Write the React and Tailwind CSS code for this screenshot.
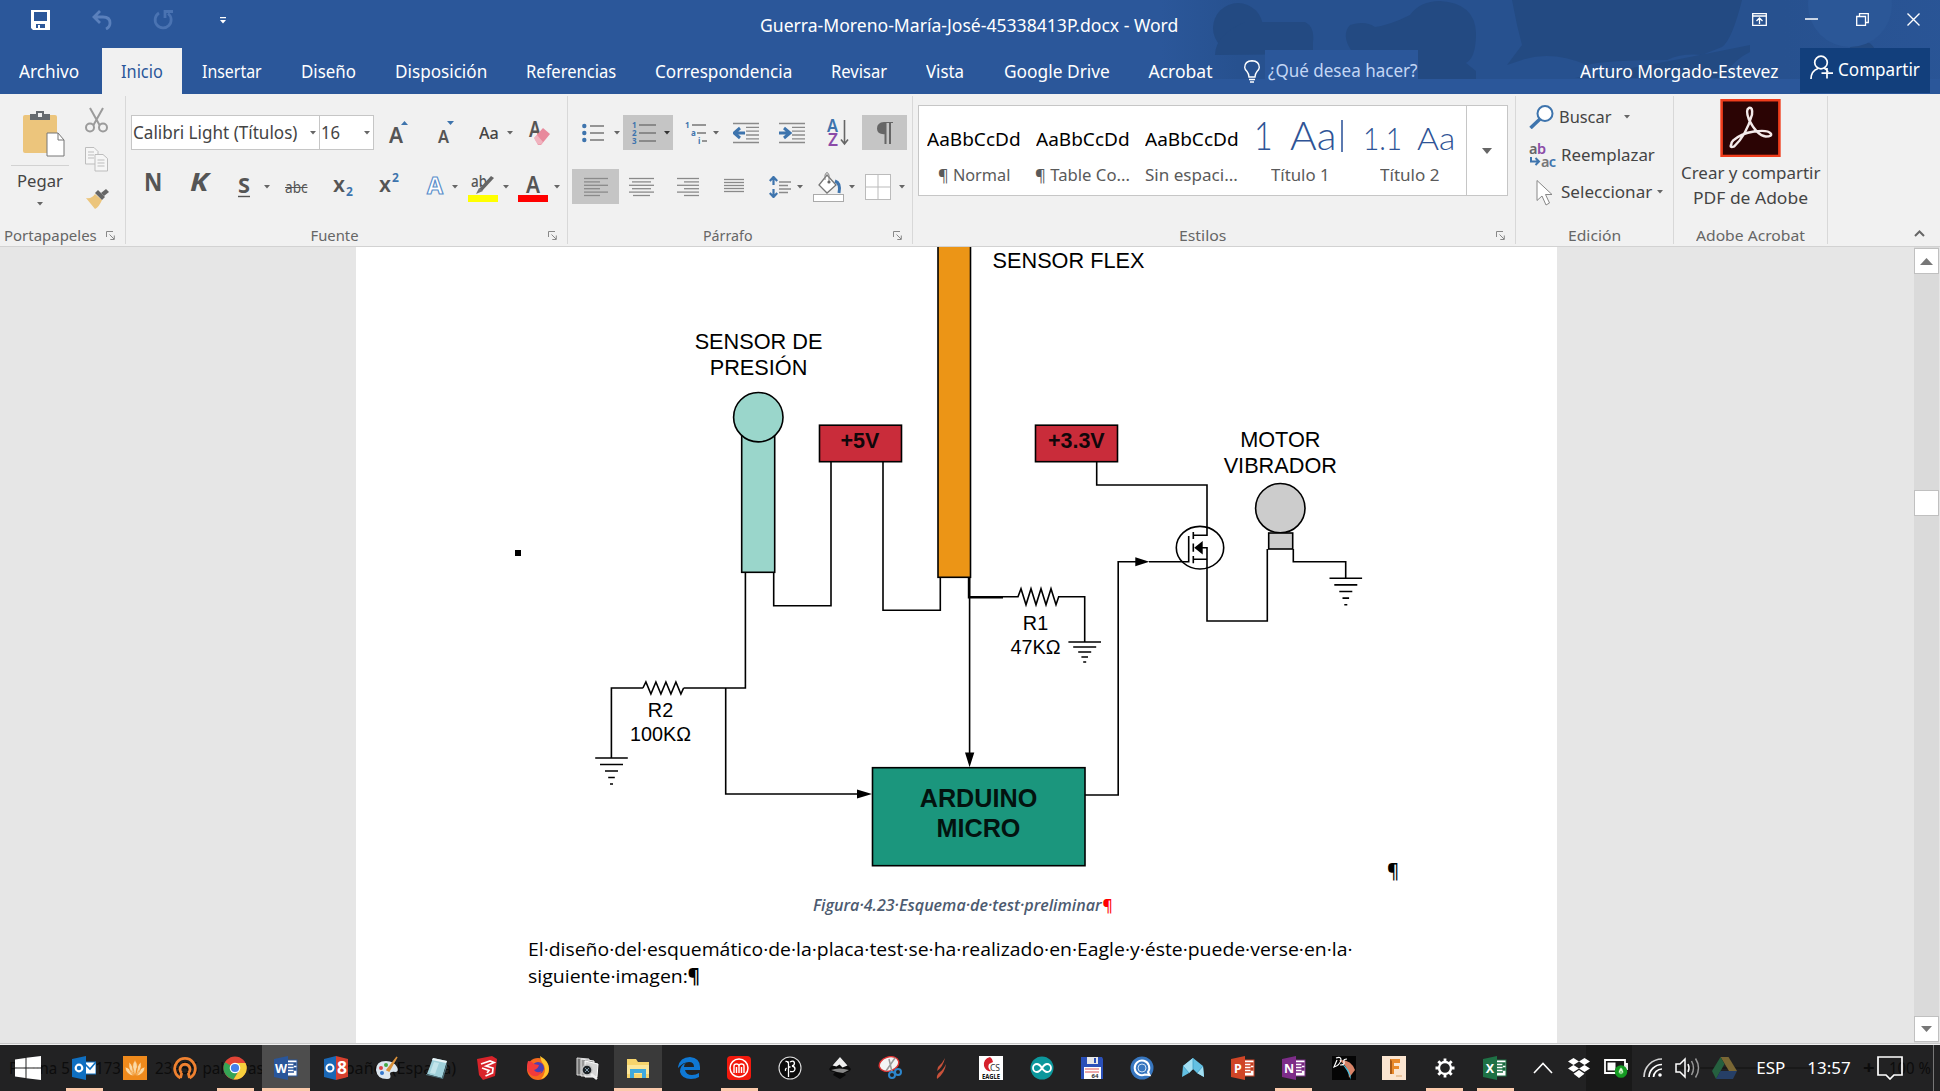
import React, { useLayoutEffect, useRef, useState } from "react";

/* Text line condensed or expanded to occupy a given width. */
function Fit({ w, className = "", children }) {
  const ref = useRef(null);
  const [scale, setScale] = useState(1);
  useLayoutEffect(() => {
    const natural = ref.current.offsetWidth;
    if (natural) setScale(w / natural);
  }, [w, children]);
  return (
    <span className={"inline-block shrink-0 whitespace-nowrap text-left " + className} style={{ width: w }}>
      <span ref={ref} className="inline-block origin-left whitespace-pre" style={{ transform: `scaleX(${scale})` }}>
        {children}
      </span>
    </span>
  );
}

function Caret({ className = "text-[#666]" }) {
  return (
    <svg width="6" height="4" viewBox="0 0 6 4" className={"shrink-0 " + className}>
      <path d="M0 0h6L3 3.6z" fill="currentColor" />
    </svg>
  );
}

function Slot({ className = "", children }) {
  return <div className={"flex shrink-0 items-center " + className}>{children}</div>;
}

/* ---------- title bar and tabs ---------- */

function HeaderPattern() {
  return (
    <svg className="absolute right-0 top-0" width="780" height="94" viewBox="1160 0 780 94">
      <defs>
        <linearGradient id="hp" x1="0" x2="1" y1="0" y2="0">
          <stop offset="0" stopColor="#27518f" stopOpacity="0" />
          <stop offset="0.1" stopColor="#27518f" />
          <stop offset="0.8" stopColor="#27518f" />
          <stop offset="1" stopColor="#27518f" stopOpacity="0.4" />
        </linearGradient>
      </defs>
      <rect x="1160" y="0" width="780" height="79" fill="url(#hp)" />
      <g fill="#234a82">
        <circle cx="1238" cy="28" r="25" />
        <path d="M1215 55q0-20 30-33h60q10 5 8 20v12z" />
        <path d="M1350 25q15-5 25 2 15-2 35-12 10-14 30-14 35 2 36 32 0 25-10 30l10 8v8h-58v-29h-67q-10-15-1-25z" />
        <path d="M1512 0h230q-10 40-20 47l-20 8q-20-2-35 5-60 0-80 5-35-15-65-5l-15 5 15-20-5-20z" />
        <path d="M1700 55l50-10v7q-20 10-25 26h-150q60-10 125-23z" />
        <circle cx="1862" cy="55" r="14" />
      </g>
      <circle cx="1850" cy="5" r="42" fill="#2b5797" />
    </svg>
  );
}

function TitleBar() {
  return (
    <div className="relative flex h-[48px] text-white">
      <div className="flex items-start pl-[31px] pt-[10px]">
        <svg width="19" height="20" viewBox="0 0 19 20" className="mr-[42px]">
          <path d="M0 0h19v20H2L0 18z" fill="#fff" />
          <path d="M3 2h13v9H3zM5 14h9v4H5z" fill="#2b579a" />
          <path d="M7 15h2v3H7z" fill="#fff" />
        </svg>
        <svg width="20" height="20" viewBox="0 0 20 20" fill="none" stroke="#5a80bc" strokeWidth="2.8" className="mr-[41px]">
          <path d="M8 1L2 7l6 6M2 7h9q7 0 7 6 0 4-4 6" />
        </svg>
        <svg width="21" height="20" viewBox="0 0 21 20" fill="none" stroke="#4a73b2" strokeWidth="2.8">
          <path d="M6 3A8 8 0 1 0 15 3.500M12 8V1.500h8" />
        </svg>
        <svg width="6" height="7" viewBox="0 0 6 7" fill="#fff" className="ml-[46px] mt-[7px]">
          <path d="M0 0h6v1.300H0zM0 3h6L3 6.500z" />
        </svg>
      </div>
      <div className="flex h-[50px] flex-1 items-center pl-[534px] text-[17.500px]">
        <Fit w={418}>Guerra-Moreno-María-José-45338413P.docx - Word</Fit>
      </div>
      <div className="flex h-[38px] w-[188px] items-center">
        <svg width="15" height="13" viewBox="0 0 15 13" fill="none" stroke="#fff" strokeWidth="1.300" className="mr-[38px]">
          <path d="M.7.7h13.600v11.600H.7zM.7 3h13.600M7.500 11V5M4.500 8l3-3 3 3" />
        </svg>
        <svg width="13" height="2" className="mr-[38px]"><path d="M0 1h13" stroke="#fff" strokeWidth="1.500" /></svg>
        <svg width="13" height="13" viewBox="0 0 13 13" fill="none" stroke="#fff" strokeWidth="1.300" className="mr-[38px]">
          <path d="M.7 3.500h8.800v8.800H.7zM3.500 3.500V.7h8.800v8.800h-2.800" />
        </svg>
        <svg width="13" height="13" viewBox="0 0 13 13" stroke="#fff" strokeWidth="1.400"><path d="M.5.5l12 12M12.500.5l-12 12" /></svg>
      </div>
    </div>
  );
}

const tabs = [
  ["Insertar", 60], ["Diseño", 55], ["Disposición", 92], ["Referencias", 90], ["Correspondencia", 137],
  ["Revisar", 56], ["Vista", 38.500], ["Google Drive", 106], ["Acrobat", 64],
];

function TabRow() {
  return (
    <div className="relative flex h-[46px] items-stretch text-[17.500px] text-white">
      <div className="flex w-[102px] items-center pl-[19px] pt-px"><Fit w={60}>Archivo</Fit></div>
      <div className="flex w-[80px] items-center justify-center bg-[#f1f1f1] pt-px text-[#2b579a]"><Fit w={42}>Inicio</Fit></div>
      <div className="flex items-center gap-[39px] pl-[20px] pt-px">
        {tabs.map(([t, w]) => <Fit key={t} w={w}>{t}</Fit>)}
      </div>
      <svg width="16" height="23" viewBox="0 0 16 23" fill="none" stroke="#fff" strokeWidth="1.400" className="ml-[31px] mt-[12px]">
        <path d="M5 17q0-3-2-5.500Q.7 9 .7 7.500.7 1 8 .7q7.300.3 7.300 6.800 0 1.500-2.300 4-2 2.500-2 5.500zM5 19.500h6M6 22h4" />
      </svg>
      <div className="ml-[5px] mt-[2px] flex h-[29px] w-[153px] items-center bg-[#2b579a] pl-[3px] pt-[11px] text-[#c3d6f4]">
        <Fit w={149}>¿Qué desea hacer?</Fit>
      </div>
      <div className="flex flex-1 items-center justify-end pr-[22px] pt-px"><Fit w={198}>Arturo Morgado-Estevez</Fit></div>
      <div className="mr-[10px] flex h-[45px] w-[130px] items-start bg-[#123f7c] pl-[10px]">
        <svg width="23" height="25" viewBox="0 0 23 25" fill="none" stroke="#fff" strokeWidth="1.700" className="mt-[7px]">
          <circle cx="11" cy="7.500" r="6.300" />
          <path d="M1 24q0-8 7-10.500M14 13q3 1.500 4 4M17 13v10.500M11.500 18.200H23" />
        </svg>
        <Fit w={82} className="ml-[5px] mt-[8px]">Compartir</Fit>
      </div>
    </div>
  );
}

/* ---------- ribbon ---------- */

function Divider() {
  return <div className="mt-[2px] h-[148px] w-px shrink-0 bg-[#d8d8d8]" />;
}

function Label({ w, launcher = true, children, className = "pr-[11px]" }) {
  return (
    <div className={"flex h-[22px] items-center text-[14.800px] text-[#666] " + className}>
      <div className={"flex flex-1 justify-center " + (launcher ? "pr-[5px]" : "")}><Fit w={w}>{children}</Fit></div>
      {launcher && (
        <svg width="9" height="9" viewBox="0 0 9 9" fill="none" stroke="#888" className="shrink-0">
          <path d="M.5 6V.5H7M3.500 3.500L8 8M8.300 4.500v4h-4" />
        </svg>
      )}
    </div>
  );
}

function Clipboard() {
  return (
    <div className="flex w-[125px] flex-col">
      <div className="flex h-[131px]">
        <div className="flex w-[79px] flex-col items-center">
          <svg width="42" height="47" viewBox="0 0 42 47" className="ml-[8px] mt-[16px]">
            <rect x="0" y="5" width="34" height="38" rx="2" fill="#ecc57c" />
            <path d="M7 10V4h6V1h8v3h6v6z" fill="#666b70" />
            <rect x="15" y="3" width="4" height="4" fill="#f1f1f1" />
            <path d="M24 23h11l6 7v16H24z" fill="#fff" stroke="#777" />
            <path d="M35 23v7h6" fill="none" stroke="#777" />
          </svg>
          <div className="mt-[8px] h-px w-[58px] bg-[#d2d2d2]" />
          <Fit w={46} className="mt-[2px] text-[17px] text-[#444]">Pegar</Fit>
          <Caret className="mt-[8px] text-[#666]" />
        </div>
        <div className="flex flex-col items-start pl-[6px] pt-[13px]">
          <svg width="23" height="26" viewBox="0 0 23 26" fill="none" stroke="#9b9b9b" strokeWidth="2">
            <path d="M5 1l9.500 17M18 1L8.500 18" /><circle cx="5" cy="20.500" r="4" /><circle cx="18" cy="20.500" r="4" />
          </svg>
          <svg width="23" height="25" viewBox="0 0 23 25" fill="#f6f6f6" stroke="#bdbdbd" className="mt-[14px]">
            <path d="M.5.500H9l4 4V17H.5z" /><path d="M10 7.500h8l4.500 4V24H10z" />
            <path d="M3 5h6M3 8h6M3 11h6M12.500 13h7M12.500 16h7M12.500 19h7" />
          </svg>
          <svg width="24" height="21" viewBox="0 0 24 21" className="mt-[17px]">
            <path d="M1 9q6 1 9-4l7 6q-3 7-7 9z" fill="#ecc57c" />
            <path d="M10 4l3-3 7 7-3 3z" fill="#666" /><path d="M16 4l5-4 3 3-5 4z" fill="#666" />
          </svg>
        </div>
      </div>
      <Label w={93} className="pr-[10px]">Portapapeles</Label>
    </div>
  );
}

function FontGroup() {
  return (
    <div className="flex w-[441px] flex-col text-[#444]">
      <div className="mt-[21px] flex h-[35px] items-center pl-[5px]">
        <div className="flex h-[35px] w-[189px] items-center border border-[#c6c6c6] bg-white pl-px text-[17.500px]">
          <Fit w={164}>Calibri Light (Títulos)</Fit><span className="w-[13px]" /><Caret />
        </div>
        <div className="mr-[15px] flex h-[35px] w-[54px] items-center border border-l-0 border-[#c6c6c6] bg-white pl-px text-[17.500px]">
          <Fit w={19}>16</Fit><span className="w-[24px]" /><Caret />
        </div>
        <Slot className="w-[49px]">
          <svg width="19" height="24" viewBox="0 0 19 24" overflow="visible"><text x="0" y="22" fontSize="21" fontWeight="600" fill="#555" textLength="14" lengthAdjust="spacingAndGlyphs">A</text><path d="M12 4l3.500-4L19 4z" fill="#3e74ad" /></svg>
        </Slot>
        <Slot className="w-[41px]">
          <svg width="17" height="24" viewBox="0 0 17 24" overflow="visible"><text x="0" y="22" fontSize="17.500" fontWeight="600" fill="#555" textLength="11" lengthAdjust="spacingAndGlyphs">A</text><path d="M9 0h7l-3.500 4z" fill="#3e74ad" /></svg>
        </Slot>
        <Slot className="w-[28px] text-[17px] font-medium"><Fit w={20}>Aa</Fit></Slot>
        <Slot className="w-[22px]"><Caret /></Slot>
        <svg width="22" height="24" viewBox="0 0 22 24" overflow="visible">
          <text x="0" y="16" fontSize="21" fontWeight="600" fill="#555" textLength="12" lengthAdjust="spacingAndGlyphs">A</text>
          <path d="M5 17l9-10 7 6-9 11H9z" fill="#e8899c" /><path d="M5 17l3-3 6 7-2 2.500H9z" fill="#fff" opacity=".35" />
        </svg>
      </div>
      <div className="mt-[19px] flex h-[35px] items-center pl-[18px]">
        <Slot className="w-[46px] pb-[9px] text-[25px] font-bold text-[#555]"><Fit w={18}>N</Fit></Slot>
        <Slot className="w-[48px] pb-[9px] text-[25px] font-bold italic text-[#555]"><Fit w={18}>K</Fit></Slot>
        <Slot className="w-[26px]">
          <svg width="12" height="28" viewBox="0 0 12 28" overflow="visible"><text y="20" fontSize="22" fontWeight="700" fill="#555" textLength="12" lengthAdjust="spacingAndGlyphs">S</text><path d="M0 23.500h12" stroke="#555" strokeWidth="1.400" /></svg>
        </Slot>
        <Slot className="w-[21px]"><Caret /></Slot>
        <Slot className="w-[48px] text-[16px] text-[#555]"><Fit w={23}><s>abc</s></Fit></Slot>
        <Slot className="w-[46px]">
          <svg width="20" height="26" viewBox="0 0 20 26" overflow="visible"><text y="18" fontSize="22" fontWeight="600" fill="#555" textLength="12" lengthAdjust="spacingAndGlyphs">x</text><text x="13" y="22" fontSize="12" fontWeight="700" fill="#3e74ad">2</text></svg>
        </Slot>
        <Slot className="w-[48px]">
          <svg width="20" height="30" viewBox="0 0 20 30" overflow="visible"><text y="20" fontSize="22" fontWeight="600" fill="#555" textLength="12" lengthAdjust="spacingAndGlyphs">x</text><text x="13" y="10" fontSize="12" fontWeight="700" fill="#3e74ad">2</text></svg>
        </Slot>
        <Slot className="w-[25px]">
          <svg width="18" height="24" viewBox="0 0 18 24" overflow="visible"><text x="0" y="19" fontSize="24" fontWeight="700" fill="#fff" stroke="#5b8fcb" strokeWidth="1.200" textLength="16" lengthAdjust="spacingAndGlyphs">A</text></svg>
        </Slot>
        <Slot className="w-[16px]"><Caret /></Slot>
        <Slot className="w-[35px]">
          <svg width="30" height="30" viewBox="0 0 30 30" overflow="visible">
            <text x="3" y="15" fontSize="16" fontWeight="500" fill="#555" textLength="16" lengthAdjust="spacingAndGlyphs">ab</text>
            <path d="M23 4l3 2-12 13-3-2z" fill="#666" /><path d="M11 16l4 3-7 3z" fill="#777" /><rect y="23" width="30" height="7" fill="#ff0" />
          </svg>
        </Slot>
        <Slot className="w-[15px]"><Caret /></Slot>
        <Slot className="w-[36px]">
          <svg width="30" height="30" viewBox="0 0 30 30" overflow="visible"><text x="8" y="21" fontSize="22.500" fontWeight="600" fill="#555" textLength="14" lengthAdjust="spacingAndGlyphs">A</text><rect y="23" width="30" height="7" fill="#f00" /></svg>
        </Slot>
        <Caret />
      </div>
      <div className="h-[21px]" />
      <Label w={48} className="pr-[10px]">Fuente</Label>
    </div>
  );
}

function Lines({ rows, w, h = 20, step = 3.400 }) {
  return (
    <svg width={w} height={h} viewBox={`0 0 ${w} ${h}`} stroke="#8a8a8a" strokeWidth="1.300">
      {rows.map(([a, b], i) => <path key={i} d={`M${a} ${i * step + 1.500}H${b}`} />)}
    </svg>
  );
}

function Indent({ flip }) {
  return (
    <svg width="26" height="22" viewBox="0 0 26 22">
      <path d="M0 1.500h26M13 5.400h13M13 9.200h13M13 13h13M13 16.800h13M0 20.500h26" stroke="#8a8a8a" strokeWidth="1.300" />
      <path d={flip ? "M0 11h9M5 6l6 5-6 5" : "M12 11H3M7 6l-6 5 6 5"} stroke="#3e74ad" strokeWidth="3" fill="none" />
    </svg>
  );
}

function Paragraph() {
  return (
    <div className="flex w-[344px] flex-col text-[#444]">
      <div className="mt-[21px] flex h-[35px] items-center pl-[14px]">
        <Slot className="w-[32px]">
          <svg width="22" height="20" viewBox="0 0 22 20"><path d="M8 3h14M8 10h14M8 17h14" stroke="#777" strokeWidth="1.400" /><g fill="#3e74ad"><circle cx="2.300" cy="3" r="2.200" /><circle cx="2.300" cy="10" r="2.200" /><circle cx="2.300" cy="17" r="2.200" /></g></svg>
        </Slot>
        <Slot className="w-[9px]"><Caret /></Slot>
        <div className="flex h-[35px] w-[50px] items-center bg-[#c5c5c5] pl-[9px]">
          <svg width="24" height="24" viewBox="0 0 24 24" overflow="visible"><path d="M7 4h17M7 12h17M7 20h17" stroke="#777" strokeWidth="1.400" /><g fill="#3e74ad" fontSize="8" fontWeight="700"><text x="0" y="7">1</text><text x="0" y="15">2</text><text x="0" y="23">3</text></g></svg>
          <span className="w-[8px]" /><Caret className="text-[#333]" />
        </div>
        <Slot className="ml-[12px] w-[28px]">
          <svg width="22" height="24" viewBox="0 0 22 24" overflow="visible"><path d="M7 4h14M12 12h9M17 20h5" stroke="#777" strokeWidth="1.400" /><g fill="#3e74ad" fontSize="8" fontWeight="700"><text x="0" y="7">1</text><text x="6" y="15">a</text><text x="13" y="23">i</text></g></svg>
        </Slot>
        <Slot className="w-[20px]"><Caret /></Slot>
        <Slot className="w-[46px]"><Indent /></Slot>
        <Slot className="w-[48px]"><Indent flip /></Slot>
        <Slot className="w-[35px]">
          <svg width="22" height="28" viewBox="0 0 22 28" overflow="visible"><text y="13" fontSize="17" fontWeight="600" fill="#3e74ad" textLength="11" lengthAdjust="spacingAndGlyphs">A</text><text x="1" y="27" fontSize="17" fontWeight="600" fill="#8b4ba8" textLength="10" lengthAdjust="spacingAndGlyphs">Z</text><path d="M17.500 1v24M14 20.500l3.500 4.500 3.500-4.500" stroke="#666" strokeWidth="1.600" fill="none" /></svg>
        </Slot>
        <div className="flex h-[35px] w-[45px] items-center justify-center bg-[#c5c5c5]">
          <svg width="16" height="22" viewBox="0 0 16 22"><path d="M7 0h9M8.500 1v21M13 1v21" stroke="#666" strokeWidth="2" /><path d="M9 0v12Q0 13 0 6.500 0 .5 7 0z" fill="#666" /></svg>
        </div>
      </div>
      <div className="mt-[19px] flex h-[35px] items-center pl-[4px]">
        <div className="mr-[10px] flex h-[35px] w-[47px] items-center justify-center bg-[#c5c5c5]"><Lines w={24} rows={[[0, 24], [0, 16], [0, 24], [0, 16], [0, 24], [0, 16]]} /></div>
        <Slot className="w-[48px]"><Lines w={25} rows={[[0, 25], [3, 22], [0, 25], [3, 22], [0, 25], [4, 21]]} /></Slot>
        <Slot className="w-[47px]"><Lines w={22} rows={[[0, 22], [7, 22], [0, 22], [7, 22], [0, 22], [7, 22]]} /></Slot>
        <Slot className="w-[45px]"><Lines w={20} h={18} step={3} rows={[[0, 20], [0, 20], [0, 20], [0, 20], [0, 20]]} /></Slot>
        <Slot className="w-[28px]">
          <svg width="22" height="22" viewBox="0 0 22 22" fill="none"><path d="M10 6h12M10 9.500h9M10 13h12M10 16.500h9" stroke="#8a8a8a" strokeWidth="1.300" /><path d="M4.500 1v8M4.500 13v8M.8 5l3.700-4 3.700 4M.8 17l3.700 4 3.700-4" stroke="#3e74ad" strokeWidth="2.200" /></svg>
        </Slot>
        <Slot className="w-[16px]"><Caret /></Slot>
        <Slot className="w-[36px]">
          <svg width="31" height="30" viewBox="0 0 31 30"><path d="M14 3l9 10-9 8-8-8z" fill="#fff" stroke="#777" strokeWidth="1.300" /><path d="M12 8V3q2-5 4 0v7" fill="none" stroke="#888" /><circle cx="16" cy="10" r="1.600" fill="#666" /><path d="M22 9q6 2 4 12" fill="none" stroke="#3e74ad" strokeWidth="3" /><rect x=".5" y="22.500" width="30" height="7" fill="#fff" stroke="#aaa" /></svg>
        </Slot>
        <Slot className="w-[16px]"><Caret /></Slot>
        <Slot className="w-[34px]">
          <svg width="26" height="26" viewBox="0 0 26 26"><rect x=".5" y=".5" width="25" height="25" fill="#fff" stroke="#bbb" /><path d="M13 0v26M0 13h26" stroke="#bbb" /></svg>
        </Slot>
        <Caret />
      </div>
      <div className="h-[21px]" />
      <Label w={50} className="pr-[10px]">Párrafo</Label>
    </div>
  );
}

function StyleCell({ sample, label, w }) {
  return (
    <div className="flex w-[109px] flex-col items-center">
      <div className="flex h-[58px] w-[94px] items-center overflow-hidden">{sample}</div>
      <Fit w={w} className="-mt-[1px] text-[16.500px] leading-[24px] text-[#5a5a5a]">{label}</Fit>
    </div>
  );
}

function Styles() {
  const normal = <Fit w={94} className="pt-[8px] text-[18px] text-black">AaBbCcDd</Fit>;
  return (
    <div className="flex w-[602px] flex-col">
      <div className="ml-[5px] mt-[11px] flex h-[92px] w-[590px] border border-[#c6c6c6] bg-white">
        <StyleCell w={72} label="¶ Normal" sample={normal} />
        <StyleCell w={95} label="¶ Table Co..." sample={normal} />
        <StyleCell w={93} label="Sin espaci..." sample={normal} />
        <StyleCell w={59} label="Título 1" sample={
          <span className="flex font-['Lato',sans-serif] text-[39px] font-light leading-[60px] text-[#2f5496]">
            <Fit w={19}>1</Fit><Fit w={46} className="ml-[17px]">Aa</Fit>
            <span className="ml-[5px] mt-[15px] h-[32px] w-[2px] bg-[#5c7ab0]" />
          </span>
        } />
        <StyleCell w={60} label="Título 2" sample={
          <span className="flex pt-[6px] font-['Lato',sans-serif] text-[31px] font-light leading-[52px] text-[#2f5496]">
            <Fit w={39}>1.1</Fit><Fit w={38} className="ml-[15px]">Aa</Fit>
          </span>
        } />
        <div className="ml-[2px] flex flex-1 items-center justify-center border-l border-[#c6c6c6]">
          <svg width="10" height="6"><path d="M0 0h10L5 6z" fill="#666" /></svg>
        </div>
      </div>
      <div className="h-[28px]" />
      <Label w={47} className="pr-[10px]">Estilos</Label>
    </div>
  );
}

function Editing() {
  return (
    <div className="flex w-[157px] flex-col pl-[13px] text-[16.700px] text-[#444]">
      <div className="flex h-[131px] flex-col pt-[4px]">
        <div className="flex h-[38px] items-center">
          <svg width="25" height="24" viewBox="0 0 25 24" fill="none" className="mr-[5px]"><circle cx="16" cy="8.500" r="7.500" stroke="#3e74ad" strokeWidth="2" fill="#fff" /><path d="M11 14l-9.500 9" stroke="#3e74ad" strokeWidth="3.500" /></svg>
          <Fit w={52}>Buscar</Fit><span className="w-[13px]" /><Caret />
        </div>
        <div className="flex h-[38px] items-center">
          <svg width="28" height="27" viewBox="0 0 28 27" overflow="visible" className="mr-[4px]"><text y="12" fontSize="14.500" fontWeight="600" fill="#666" textLength="17"><tspan>a</tspan><tspan fill="#8b4ba8">b</tspan></text><path d="M2 15v4.500h7M6.500 16l3.500 3.500L6.500 23" stroke="#3e74ad" strokeWidth="2" fill="none" /><text x="12" y="24.500" fontSize="14.500" fontWeight="600" fill="#777" textLength="15"><tspan>a</tspan><tspan fill="#3e74ad">c</tspan></text></svg>
          <Fit w={94}>Reemplazar</Fit>
        </div>
        <div className="flex h-[36px] items-center">
          <svg width="17" height="27" viewBox="0 0 17 27" className="ml-[7px] mr-[8px]"><path d="M1 1.500v20l5-4.500 4 9 3.500-2-4-8.500h6.500z" fill="#fff" stroke="#888" /></svg>
          <Fit w={91}>Seleccionar</Fit><span className="w-[5px]" /><Caret />
        </div>
      </div>
      <Label w={53} launcher={false} className="pr-[13px]">Edición</Label>
    </div>
  );
}

function Acrobat() {
  return (
    <div className="flex w-[153px] flex-col items-center text-[16.700px] text-[#444]">
      <svg width="61" height="59" viewBox="0 0 61 59" className="mt-[5px]">
        <rect x="1.200" y="1.200" width="58.600" height="56.600" fill="#2b0404" stroke="#f03d1c" strokeWidth="2.600" />
        <path d="M11 46q-2 4 3 2Q26 37 32 16q1-8-3-7-4 2 0 12 8 16 17 17 7 0 5-3-3-4-17-2-13 2-21 9-2 2-2 4z" fill="none" stroke="#f4eaea" strokeWidth="2.500" />
      </svg>
      <Fit w={139} className="mt-[4px] leading-[24px]">Crear y compartir</Fit>
      <Fit w={115} className="mt-px leading-[24px]">PDF de Adobe</Fit>
      <div className="h-[14px]" />
      <Label w={109} launcher={false} className="">Adobe Acrobat</Label>
    </div>
  );
}

function Ribbon() {
  return (
    <div className="flex h-[153px] border-b border-[#d2d2d2] bg-[#f1f1f1]">
      <Clipboard /><Divider /><FontGroup /><Divider /><Paragraph /><Divider /><Styles /><Divider /><Editing /><Divider /><Acrobat /><Divider />
      <div className="flex flex-1 items-end justify-end pb-[9px] pr-[15px]">
        <svg width="11" height="7" viewBox="0 0 11 7" fill="none" stroke="#666" strokeWidth="2"><path d="M1 6l4.500-4.500L10 6" /></svg>
      </div>
    </div>
  );
}

/* ---------- document ---------- */

function Ground({ x, y, step }) {
  const half = [16.300, 11.500, 6.500, 3.300, 1.500];
  return <path d={half.map((h, i) => `M${x - h} ${y + i * step}h${h * 2}`).join("")} />;
}

function Schematic() {
  return (
    <svg className="absolute left-0 top-0" width="1201" height="645" viewBox="356 247 1201 645" fill="none" stroke="#000" strokeWidth="1.600" fontFamily="Liberation Sans, Arial, sans-serif">
      <rect x="741.700" y="425" width="33" height="147.300" fill="#9ad6cb" />
      <circle cx="758.300" cy="417.200" r="24.700" fill="#9ad6cb" />
      <rect x="819.500" y="425.200" width="82" height="36.500" fill="#c92c3a" />
      <rect x="1035.500" y="425.200" width="82" height="36.500" fill="#c92c3a" />
      <rect x="938" y="230" width="32.500" height="347.300" fill="#ec9516" />
      <rect x="872.500" y="767.700" width="212.500" height="98" fill="#1b967d" />
      <path d="M745.400 572.300V688H683.600M642.900 688H611.400V758M642.900 688l3-6 5 12 5-12 5 12 5-12 5 12 5-12 5 12 2.700-6" strokeLinejoin="miter" />
      <Ground x={611.500} y={758} step={6.500} />
      <path d="M725.700 688V794H858M773.700 572.300V605.700H831V461.500M883 461.500V610.300H940.300V577.300M969.600 577.300V755" />
      <path d="M969 577.300V597.200H1003" strokeWidth="2.400" />
      <path d="M1003 596.700H1018l3-8 5 16 5-16 5 16 5-16 5 16 5-16 5 16 2.700-8H1084.700V642" />
      <Ground x={1084.700} y={642} step={5} />
      <path d="M1085 795H1118.200V561.700H1136M1149 561.700H1188.700V536M1096.700 461.500V485H1207V535.300H1193.300M1193.300 532v7M1193.300 543.500v8.200M1193.300 556v7.300M1202 547.700H1207V621H1267.300V549M1193.300 559.300H1207" />
      <ellipse cx="1200" cy="547.700" rx="23.700" ry="21.300" />
      <circle cx="1280.300" cy="508.200" r="24.700" fill="#ccc" />
      <rect x="1268.700" y="533" width="24" height="16" fill="#ccc" />
      <path d="M1293.300 549V561.700H1345.700V578.300" />
      <Ground x={1345.800} y={578.300} step={6.600} />
      <g fill="#000" stroke="none">
        <path d="M857 789.500l15 4.500-15 4.500zM965 752.500h9.300l-4.700 14.700zM1135.300 557.200l14 4.500-14 4.500zM1202.700 541v13.500l-8.500-6.800z" />
        <rect x="515" y="550" width="6" height="6" />
        <g textAnchor="middle" fontSize="21.700">
          <text x="758.500" y="349">SENSOR DE</text>
          <text x="758.500" y="375">PRESIÓN</text>
          <text x="1068.500" y="268">SENSOR FLEX</text>
          <text x="1280.300" y="446.700">MOTOR</text>
          <text x="1280.300" y="473">VIBRADOR</text>
          <g fontWeight="700" fontSize="21.500" fill="#10070a">
            <text x="860" y="447.500">+5V</text>
            <text x="1076.300" y="447.500">+3.3V</text>
            <g fontSize="25.200" fill="#03130f">
              <text x="978.500" y="807">ARDUINO</text>
              <text x="978.500" y="837">MICRO</text>
            </g>
          </g>
          <g fontSize="19.800">
            <text x="1035.500" y="630">R1</text>
            <text x="1035.500" y="654">47KΩ</text>
            <text x="660.500" y="717">R2</text>
            <text x="660.500" y="740.500">100KΩ</text>
          </g>
        </g>
      </g>
    </svg>
  );
}

function Page() {
  return (
    <div className="relative flex w-[1201px] shrink-0 flex-col bg-white font-['Open_Sans',sans-serif] text-black">
      <Schematic />
      <div className="mt-[612px] flex h-[24px] items-center justify-end pr-[158px] text-[20px] font-semibold"><Fit w={12}>¶</Fit></div>
      <div className="mt-[10px] flex h-[26px] items-center pl-[457px] text-[15.700px] font-semibold italic text-[#4d5b70]">
        <Fit w={289}>Figura·4.23·Esquema·de·test·preliminar</Fit><Fit w={10} className="text-[#f00]">¶</Fit>
      </div>
      <div className="mt-[17px] flex h-[27px] items-center pl-[171.500px] text-[19px]">
        <Fit w={824}>El·diseño·del·esquemático·de·la·placa·test·se·ha·realizado·en·Eagle·y·éste·puede·verse·en·la·</Fit>
      </div>
      <div className="flex h-[27px] items-center pl-[171.500px] text-[19px]">
        <Fit w={160}>siguiente·imagen:</Fit><Fit w={12} className="font-bold">¶</Fit>
      </div>
    </div>
  );
}

function ScrollButton({ children }) {
  return <div className="flex h-[26px] w-full items-center justify-center border border-[#c0c0c0] bg-white">{children}</div>;
}

function Workspace() {
  return (
    <div className="flex h-[796px] bg-[#e6e6e6]">
      <div className="w-[356px] shrink-0" />
      <Page />
      <div className="flex-1" />
      <div className="mr-px flex w-[25px] flex-col bg-[#dadada] pt-px">
        <ScrollButton><svg width="13" height="7"><path d="M0 7l6.500-7L13 7z" fill="#777" /></svg></ScrollButton>
        <div className="h-[216px]" />
        <ScrollButton />
        <div className="flex-1" />
        <ScrollButton><svg width="11" height="6"><path d="M0 0l5.500 6L11 0z" fill="#777" /></svg></ScrollButton>
        <div className="h-px" />
      </div>
    </div>
  );
}

/* ---------- taskbar ---------- */

function OfficeIcon({ letter, color }) {
  return (
    <>
      <rect x="11" y="4" width="12" height="16" fill="#fff" stroke={color} />
      <path d="M14 7h6M14 10h6M14 13h6M14 16h6M20 7h2v2h-2zM20 12h2v2h-2z" stroke={color} strokeWidth="1.300" />
      <path d="M0 3l14-3v24L0 21z" fill={color} />
      <text x="7" y="16.500" fontSize="12.500" fontWeight="700" fill="#fff" textAnchor="middle">{letter}</text>
    </>
  );
}

const apps = [
  { id: "outlook", run: true, art: <><rect x="12" y="6" width="12" height="12" fill="#fff" stroke="#1070c0" /><path d="M13 8l5 5 6-7" fill="none" stroke="#1070c0" strokeWidth="1.600" /><path d="M0 3l14-3v24L0 21z" fill="#0f6fc1" /><circle cx="7" cy="12" r="3.300" fill="none" stroke="#fff" strokeWidth="2.200" /></> },
  { id: "lotus", art: <><rect width="24" height="24" fill="#ef8a1c" /><path d="M12 4q5 7 0 16-5-9 0-16zM6 6q5 4 5.500 14Q5 16 6 6zM18 6q-5 4-5.500 14Q19 16 18 6zM2 11q6 1 9 9-8-1-9-9zM22 11q-6 1-9 9 8-1 9-9z" fill="#fbd9a4" stroke="#ef8a1c" strokeWidth=".6" /></> },
  { id: "ring", art: <path d="M7.500 22A10.300 10.300 0 1 1 16.500 22M8.700 17A5 5 0 1 1 15.300 17M7.500 22l1.200-5M16.500 22l-1.200-5" fill="none" stroke="#ef8130" strokeWidth="2.800" /> },
  { id: "chrome", run: true, art: <><circle cx="12" cy="12" r="11.500" fill="#e24436" /><path d="M12 12L2 6.300A11.500 11.500 0 0 0 10.500 23.400L16 14z" fill="#35a455" /><path d="M12 7h10.500A11.500 11.500 0 0 1 10.500 23.400L16.500 14z" fill="#f7cf3c" /><circle cx="12" cy="12" r="5.300" fill="#fff" /><circle cx="12" cy="12" r="4.100" fill="#4580ea" /></> },
  { id: "word", run: true, active: "bg-[#4d4d4d]", art: <OfficeIcon letter="W" color="#2a569a" /> },
  { id: "office8", art: <><path d="M0 3l12-3v24L0 21z" fill="#1a67b5" /><path d="M12 0l12 3v18l-12 3z" fill="#d6402f" /><circle cx="6" cy="12" r="3.500" fill="none" stroke="#fff" strokeWidth="2" /><text x="18" y="18" fontSize="17" fontWeight="700" fill="#fff" textAnchor="middle" textLength="10" lengthAdjust="spacingAndGlyphs">8</text></> },
  { id: "paint", art: <><path d="M11 5Q1 5 1 14q1 9 11 9 5 0 3-5 0-3 6-2 3-1 1-5-3-6-11-6z" fill="#dce6ee" /><circle cx="6" cy="12" r="2" fill="#d44" /><circle cx="11" cy="9" r="2" fill="#4a4" /><circle cx="7" cy="17" r="2" fill="#37c" /><path d="M22 1l-8 14-2-1z" fill="#d9903a" stroke="#d9903a" strokeWidth="1.500" /></> },
  { id: "notepad", art: <><path d="M8 2l14 3-5 17-15-4z" fill="#9fd0da" /><path d="M8 2l14 3-1 2L7 4z" fill="#e9f3f5" /><path d="M9 6l5 1-4 11-5-1z" fill="#c3e4ea" /><path d="M1 18l16 4 5-15v3l-4 13-17-4z" fill="#4f7580" /></> },
  { id: "sketchup", art: <><path d="M2 3l15-3 5 3-2 17-12 4-4-5z" fill="#d8232a" /><path d="M6 8l9-3 4 1.500-8 3.500 7 2-.5 5-7 3M7 12l7 2.500-2 2.500" fill="none" stroke="#fff" strokeWidth="1.700" /></> },
  { id: "firefox", art: <><circle cx="12" cy="13" r="11" fill="#f56a1d" /><path d="M14 0q9 5 9 13a11 11 0 0 1-8 10q6-7 3-14-3-3-4-9z" fill="#ffc32b" /><circle cx="12" cy="12" r="6" fill="#4b3fb2" /><path d="M2 5q4 0 6 3l5 1q-1 4-5 5 3 4 8 1-4 8-11 4Q-1 14 2 5z" fill="#f23b3b" /></> },
  { id: "viewer", art: <><path d="M1 2l12 1v16H1z" fill="#777" stroke="#ddd" /><path d="M5 3l13 2v15H5z" fill="#999" stroke="#eee" /><path d="M9 5l13 3-1 13H9z" fill="#d5d5d5" stroke="#fff" /><circle cx="11" cy="14" r="5" fill="#1c2226" stroke="#c4c4c4" strokeWidth="1.300" /><path d="M9 12l4 4M13 12l-4 4" stroke="#7f97a8" /><path d="M15 18l6 5" stroke="#eee" strokeWidth="2.500" /></> },
  { id: "explorer", run: true, active: "bg-[#3a3a3a]", art: <><path d="M1 3h9l2 3h11v16H1z" fill="#f6d46c" /><path d="M1 9h22v9H1z" fill="#fce79a" /><path d="M4 22v-9h16v9h-4v-5H8v5z" fill="#3fa9dc" /></> },
  { id: "edge", art: <path d="M1 11Q3 1 13 1q10 1 10 10v3H8q1 5 7 5 4 0 7-2v4q-3 2-8 2-9 0-11-7 0-7 6-9-2 1-2 4h10q0-5-5-5-6 0-11 6z" fill="#0f78d4" /> },
  { id: "m", run: true, art: <><rect width="24" height="24" rx="4" fill="#f3190d" /><circle cx="12" cy="12" r="9" fill="none" stroke="#fff" strokeWidth="1.500" /><path d="M7 17v-7q0-2 2.500-2T12 10v7M12 10q0-2 2.500-2T17 10v7M9.500 17v-6M14.500 17v-6" fill="none" stroke="#fff" strokeWidth="1.400" /></> },
  { id: "b", art: <><circle cx="12" cy="12" r="11" fill="#0b0b0b" stroke="#ddd" strokeWidth="1.100" /><path d="M10.500 21V8q0-3-3-2.500M10.500 11h2M9 6.500q1-1 2 0M12 6q4-2 4.500 1 0 2.500-2.500 3 3 .5 3 3-.5 3.500-5 2.500M8.500 12q-1.500 1-1 3" fill="none" stroke="#fff" strokeWidth="1.300" /></> },
  { id: "inkscape", art: <><path d="M12 1L1 13q1 3 6 3l-2 3 7 4 6-4-2-2q6-1 7-4z" fill="#0a0a0a" /><path d="M12 1L4.500 9.500l4 1 3-2 3 3 5-2z" fill="#eee" /><path d="M3 14q8-3 18 0l-6 3-6-1z" fill="#888" /></> },
  { id: "snip", art: <><ellipse cx="11" cy="8" rx="10" ry="7" fill="#f4f4f4" stroke="#d33" strokeWidth="1.400" transform="rotate(-18 11 8)" /><path d="M11 3l3 13M17 2L8 15" stroke="#999" strokeWidth="1.500" /><circle cx="14" cy="19" r="3" fill="none" stroke="#2d86cc" strokeWidth="2" /><circle cx="20" cy="16" r="3" fill="none" stroke="#2d86cc" strokeWidth="2" /></> },
  { id: "feather", art: <path d="M16 2q-3 6-7 9l-1 4q6-4 8-13zM17 8q-3 6-6 8-4 3-3 7 8-6 9-15z" fill="#c8513a" /> },
  { id: "eagle", art: <><rect width="24" height="24" fill="#fff" /><path d="M11 1Q4 3 5 10q2 6 7 5-4-3-2-7l4-2q0-3-3-5z" fill="#d6202b" /><text x="16" y="15" fontSize="8.500" fill="#333" textAnchor="middle">CS</text><text x="12" y="22.500" fontSize="6.500" fontWeight="700" fill="#111" textAnchor="middle" textLength="18" lengthAdjust="spacingAndGlyphs">EAGLE</text></> },
  { id: "arduino", art: <><circle cx="12" cy="12" r="11.500" fill="#0c979c" /><path d="M12 12q-2.500-4-5-4a4 4 0 0 0 0 8q2.500 0 5-4 2.500-4 5-4a4 4 0 0 1 0 8q-2.500 0-5-4z" fill="none" stroke="#fff" strokeWidth="1.800" /></> },
  { id: "floppy", art: <><path d="M1 1h21l1 2v20H1z" fill="#2b50b8" /><path d="M7 1h11v7H7z" fill="#e7e7e7" /><path d="M14 2h2v5h-2z" fill="#2b50b8" /><path d="M4 11h17v12H4z" fill="#fff" /><path d="M5 13h14M5 16h14" stroke="#d55" /><text x="15" y="22" fontSize="6" fontWeight="700" fill="#333" textAnchor="middle">64</text></> },
  { id: "q", art: <><circle cx="12" cy="12" r="11.500" fill="#3776bf" /><path d="M15 18.500A7.300 7.300 0 1 1 18 16l1.500 3z" fill="none" stroke="#fff" strokeWidth="2" /><circle cx="12" cy="12" r="4" fill="none" stroke="#cfe1f3" /></> },
  { id: "wings", art: <><path d="M12 2l10 8 1 11-7-4-4-4-4 4-7 4 1-11z" fill="#63c0e2" /><path d="M12 2v11l-4 4L2 10zM16 17l6-7 1 11z" fill="#a3dff2" /><path d="M12 2v11M2 10l6 7M22 10l-6 7" stroke="#3d9cc4" strokeWidth=".8" /></> },
  { id: "ppt", art: <OfficeIcon letter="P" color="#d04526" /> },
  { id: "onenote", run: true, art: <OfficeIcon letter="N" color="#7d2c88" /> },
  { id: "ds", art: <><rect width="24" height="24" fill="#050505" /><path d="M7 4q12-1 16 10l-6 8q0-11-10-18z" fill="#d88468" /><path d="M9 7q10 6 10 17-3-10-10-17z" fill="#44c2e2" /><path d="M4 2q5-2 5 2-1 5-7 7l3-7M15 3q-4 0-3 3t-4 3" stroke="#fff" strokeWidth="1.200" fill="none" /></> },
  { id: "fusion", art: <><rect width="24" height="24" fill="#fbe5d0" /><path d="M8 3h10v4h-6v3h5v3h-5v5H8z" fill="#e98a2c" /><path d="M8 3l2 2v13H8z" fill="#a95a17" /><path d="M14 20h6" stroke="#e6b98c" strokeWidth="1.500" /></> },
  { id: "gear", run: true, art: <g fill="none" stroke="#fff"><circle cx="12" cy="12" r="6" strokeWidth="2.300" /><path d="M12 2.500v3.500M12 18v3.500M2.500 12H6M18 12h3.500M5.300 5.300l2.500 2.500M16.200 16.200l2.500 2.500M18.700 5.300l-2.500 2.500M7.800 16.200l-2.500 2.500" strokeWidth="2.800" /></g> },
  { id: "excel", run: true, art: <OfficeIcon letter="X" color="#1e7145" /> },
];

function Tray() {
  return (
    <div className="flex flex-1 items-center text-[17px] text-white">
      <svg width="20" height="12" viewBox="0 0 20 12" className="ml-[13px]" fill="none" stroke="#fff" strokeWidth="1.600"><path d="M1 11l9-9.500 9 9.500" /></svg>
      <svg width="22" height="20" viewBox="0 0 22 20" className="ml-[15px]" fill="#fff"><path d="M5.500 0L11 3.500 5.500 7 0 3.500zM16.500 0L22 3.500 16.500 7 11 3.500zM5.500 7L11 10.500 5.500 14 0 10.500zM16.500 7L22 10.500 16.500 14 11 10.500zM11 12l5.500 3.700L11 20l-5.500-4.300z" /></svg>
      <svg width="24" height="20" viewBox="0 0 24 20" className="ml-[14px]"><path d="M1 2h20v13H1zM21 6h2v5h-2" fill="none" stroke="#fff" strokeWidth="1.800" /><path d="M3.500 4.500h8v8h-8z" fill="#fff" /><circle cx="17" cy="13.500" r="6.300" fill="#149a22" /><path d="M17 9q5 5 0 8-5-3 0-8zM17 13v5" fill="#d5f5d0" stroke="#149a22" strokeWidth=".8" /></svg>
      <svg width="20" height="20" viewBox="0 0 20 20" className="ml-[15px]" fill="none" stroke="#fff" strokeWidth="1.700"><path d="M1 19A18 18 0 0 1 19 1" opacity=".8" /><path d="M6 19A13 13 0 0 1 19 6.500M10.500 19A8.500 8.500 0 0 1 19 11" /><circle cx="17" cy="17" r="1.800" fill="#fff" stroke="none" /></svg>
      <svg width="25" height="22" viewBox="0 0 25 22" className="ml-[12px]" fill="none" stroke="#fff" strokeWidth="1.500"><path d="M1 7h4l5-5v18l-5-5H1zM13 7q2 4 0 8" /><path d="M16.500 4q4 7 0 14M20.500 1.500q6 9.500 0 19" stroke="#999" /></svg>
      <svg width="25" height="22" viewBox="0 0 25 22" className="ml-[12px]"><path d="M8.500 0h8L25 14h-8z" fill="#7a6734" /><path d="M8.500 0l4 7L4 22l-4-8z" fill="#25603f" /><path d="M8.500 14H25l-4 8H4z" fill="#263f66" /></svg>
      <Fit w={29} className="ml-[19px]">ESP</Fit>
      <Fit w={43} className="ml-[22px]">13:57</Fit>
      <svg width="26" height="24" viewBox="0 0 26 24" className="ml-[27px]" fill="none" stroke="#fff" strokeWidth="1.700"><path d="M1 1h24v18h-8l-4 4-4-4H1z" /></svg>
      <div className="ml-[30px] h-[46px] w-px bg-[#777]" />
    </div>
  );
}

function Taskbar() {
  return (
    <div className="relative flex h-[46px] bg-[#222223]">
      <div className="absolute left-[1586px] top-0 h-[46px] w-[46px] bg-[#191919]" />
      <div className="absolute left-[9px] top-[10px] flex items-center text-[17px] text-[#0c0c0c]">
        <Fit w={112}>Página 5 de 173</Fit>
        <Fit w={109} className="ml-[34px]">23955 palabras</Fit>
        <Fit w={128} className="ml-[64px]">Español (España)</Fit>
      </div>
      <div className="absolute right-[9px] top-[10px] flex items-center text-[17px] text-[#0c0c0c]">
        <div className="mr-[16px] h-[2px] w-[170px] bg-[#191919]" />
        <Fit w={12} className="mr-[14px] font-bold">+</Fit>
        <Fit w={42}>100 %</Fit>
      </div>
      <div className="relative flex w-[59px] items-center pl-[15px]">
        <svg width="26" height="24" viewBox="0 0 26 24" fill="#fff"><path d="M0 3.500L10.500 2v9.500H0zM11.500 1.800L26 0v11.500H11.500zM0 12.500h10.500V22L0 20.500zM11.500 12.500H26V24l-14.500-1.800z" /></svg>
      </div>
      {apps.map((a) => (
        <div key={a.id} className="relative flex w-[50.400px] shrink-0 justify-center">
          <div className={"flex w-[48px] flex-col items-center " + (a.active || "")}>
            <svg width="24" height="24" viewBox="0 0 24 24" className="mt-[11px] shrink-0">{a.art}</svg>
            {a.run && <div className={"mt-[8px] h-[3px] bg-[#fbcaac] " + (a.active ? "w-full" : "w-[37px]")} />}
          </div>
        </div>
      ))}
      <div className="relative flex flex-1"><Tray /></div>
    </div>
  );
}

export default function App() {
  return (
    <div className="flex h-[1091px] w-[1940px] flex-col overflow-hidden font-['Noto_Sans',sans-serif]">
      <div className="relative h-[94px] shrink-0 bg-[#2b579a]">
        <HeaderPattern />
        <TitleBar />
        <TabRow />
      </div>
      <Ribbon />
      <Workspace />
      <div className="h-[2px] shrink-0 border-t border-[#c8c8c8] bg-[#f1f1f1]" />
      <Taskbar />
    </div>
  );
}
